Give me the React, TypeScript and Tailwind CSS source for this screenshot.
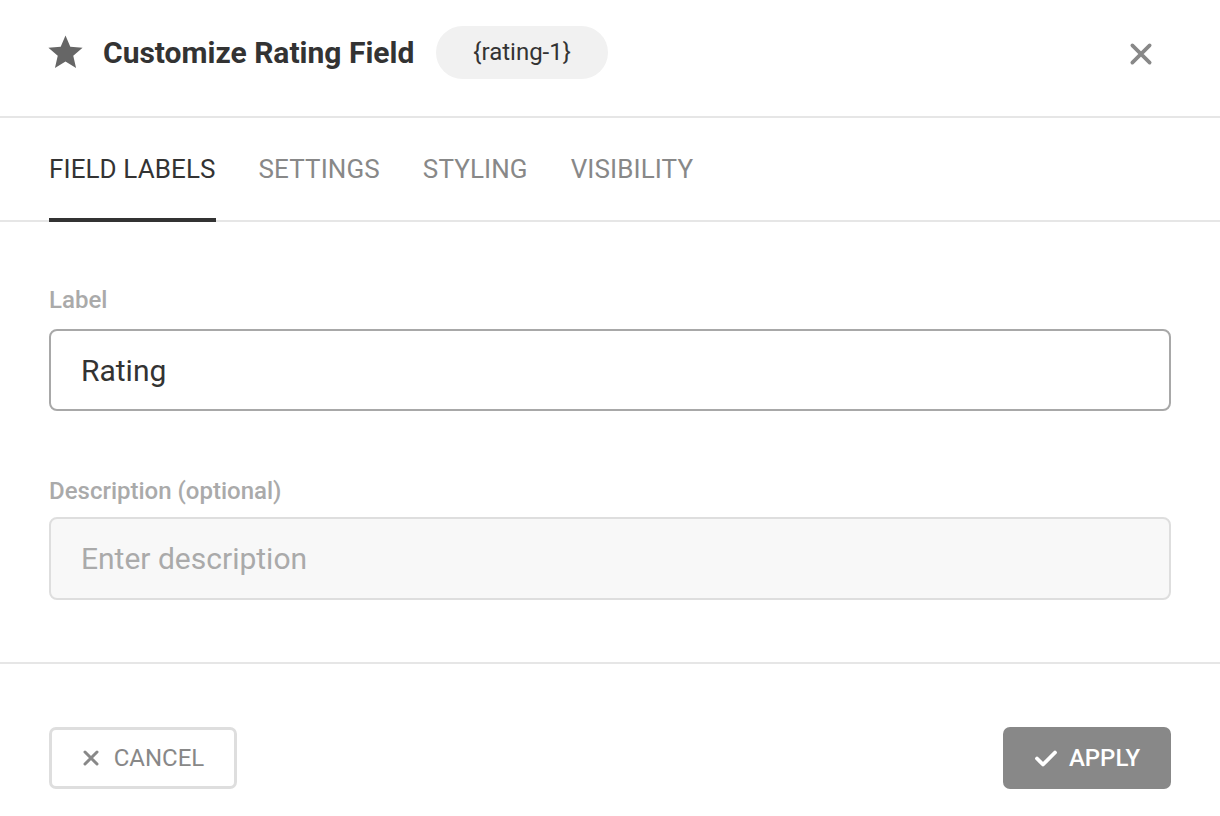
import { useState } from 'react';

const tabs = ['Field Labels', 'Settings', 'Styling', 'Visibility'];

function StarIcon() {
  return (
    <svg width="41" height="41" viewBox="0 0 24 24" className="fill-[#666]">
      <path d="M12 17.27L18.18 21l-1.64-7.03L22 9.24l-7.19-.61L12 2 9.19 8.63 2 9.24l5.46 4.73L5.82 21z" />
    </svg>
  );
}

function CloseIcon({ size = 26, stroke = 3.4 }: { size?: number; stroke?: number }) {
  return (
    <svg width={size} height={size} viewBox="0 0 24 24" fill="none" stroke="currentColor" strokeWidth={stroke} strokeLinecap="round">
      <path d="M4 4l16 16M20 4L4 20" />
    </svg>
  );
}

function CheckIcon() {
  return (
    <svg width="24" height="24" viewBox="0 0 24 24" fill="none" stroke="currentColor" strokeWidth="3.8" strokeLinecap="round" strokeLinejoin="round">
      <path d="M3 12.5l6 6L21 6.5" />
    </svg>
  );
}

export default function App() {
  const [active, setActive] = useState(0);
  const [label, setLabel] = useState('Rating');

  return (
    <div className="w-[1220px] h-[816px] bg-white font-['Roboto','Liberation_Sans',sans-serif] text-[#333] overflow-hidden">
      {/* Header */}
      <div className="h-[118px] border-b-2 border-[#e6e6e6] flex items-center pb-[12px] pl-[45px] pr-[66px]">
        <StarIcon />
        <h1 className="ml-[17px] text-[30px] font-bold text-[#333]">Customize Rating Field</h1>
        <span className="ml-[22px] h-[53px] px-[37px] rounded-full bg-[#f1f1f1] flex items-center text-[24px] text-[#333]">
          {'{rating-1}'}
        </span>
        <button className="ml-auto text-[#888] mt-[4px]">
          <CloseIcon />
        </button>
      </div>

      {/* Tabs */}
      <div className="h-[104px] border-b-2 border-[#e6e6e6] flex gap-[43px] px-[49px]">
        {tabs.map((t, i) => (
          <button
            key={t}
            onClick={() => setActive(i)}
            className={`relative h-full flex items-center uppercase text-[26px] tracking-[0.1px] ${
              i === active ? 'text-[#333]' : 'text-[#888]'
            }`}
          >
            {t}
            {i === active && <span className="absolute left-0 right-0 bottom-[-2px] h-[4px] bg-[#333]" />}
          </button>
        ))}
      </div>

      {/* Body */}
      <div className="px-[49px] pt-[64px] pb-[62px] border-b-2 border-[#e6e6e6]">
        <label className="block text-[24px] leading-[28px] font-medium text-[#aaa]">Label</label>
        <input
          value={label}
          onChange={(e) => setLabel(e.target.value)}
          className="mt-[15px] w-full h-[82px] rounded-[8px] border-2 border-[#a8a8a8] px-[30px] text-[30px] text-[#333] outline-none"
        />
        <label className="block mt-[66px] text-[24px] leading-[28px] font-medium text-[#aaa]">Description (optional)</label>
        <input
          placeholder="Enter description"
          className="mt-[12px] w-full h-[83px] rounded-[8px] border-2 border-[#dedede] bg-[#f8f8f8] px-[30px] text-[30px] text-[#333] placeholder:text-[#aaa] outline-none"
        />
      </div>

      {/* Footer */}
      <div className="px-[49px] pt-[63px] flex justify-between">
        <button className="h-[62px] w-[188px] rounded-[7px] border-[3px] border-[#dedede] flex items-center justify-center gap-[14px] text-[#888] text-[24px] uppercase">
          <CloseIcon size={18} stroke={4} />
          Cancel
        </button>
        <button className="h-[62px] w-[168px] rounded-[7px] bg-[#888] flex items-center justify-center gap-[11px] text-white text-[24px] font-medium uppercase">
          <CheckIcon />
          Apply
        </button>
      </div>
    </div>
  );
}
